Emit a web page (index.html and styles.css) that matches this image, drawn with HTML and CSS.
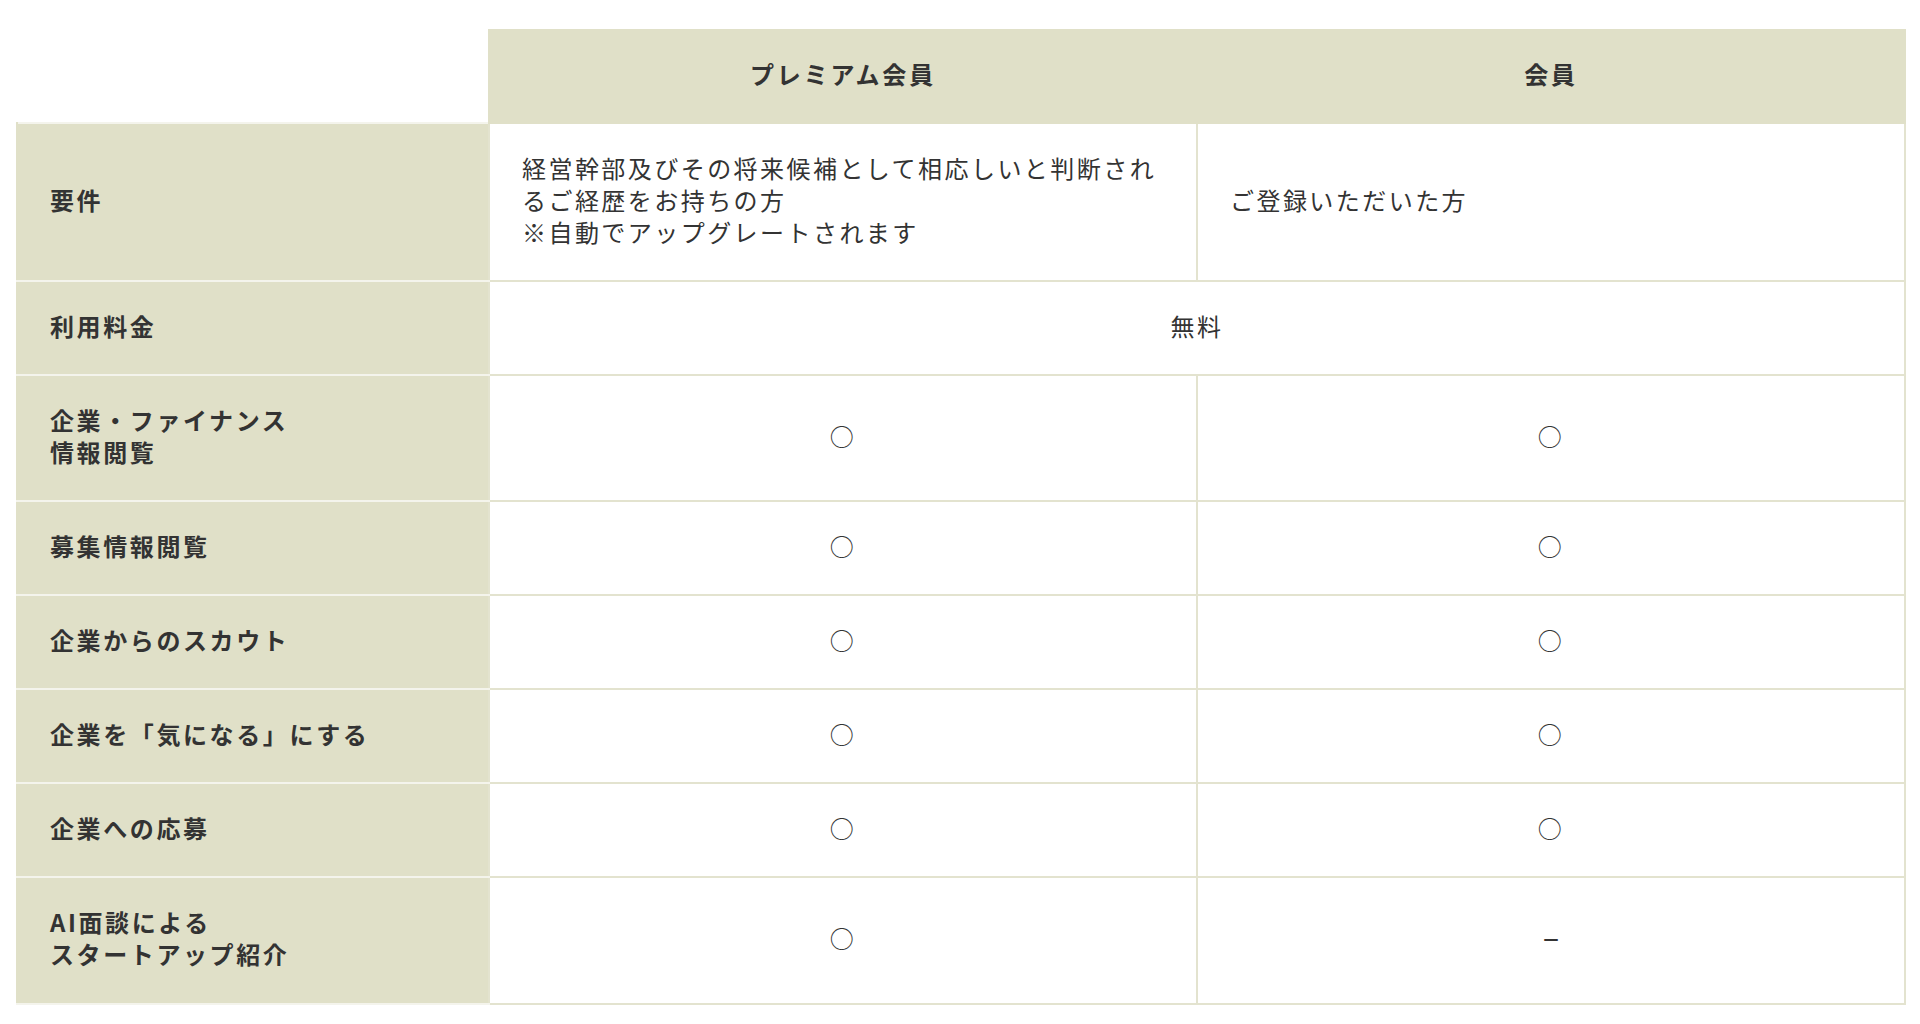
FILE: index.html
```html
<!DOCTYPE html>
<html lang="ja">
<head>
<meta charset="utf-8">
<title>会員比較</title>
<link rel="stylesheet" href="styles.css">
</head>
<body>
<div class="wrap">
  <table class="plan">
    <colgroup>
      <col class="c-label">
      <col class="c-plan">
      <col class="c-plan">
    </colgroup>
    <thead>
      <tr>
        <th class="corner"></th>
        <th class="head">プレミアム会員</th>
        <th class="head">会員</th>
      </tr>
    </thead>
    <tbody>
      <tr>
        <th class="label">要件</th>
        <td class="text">経営幹部及びその将来候補として相応しいと判断されるご経歴をお持ちの方<br>※自動でアップグレートされます</td>
        <td class="text">ご登録いただいた方</td>
      </tr>
      <tr>
        <th class="label">利用料金</th>
        <td class="mark" colspan="2">無料</td>
      </tr>
      <tr>
        <th class="label">企業・ファイナンス<br>情報閲覧</th>
        <td class="mark">○</td>
        <td class="mark">○</td>
      </tr>
      <tr>
        <th class="label">募集情報閲覧</th>
        <td class="mark">○</td>
        <td class="mark">○</td>
      </tr>
      <tr>
        <th class="label">企業からのスカウト</th>
        <td class="mark">○</td>
        <td class="mark">○</td>
      </tr>
      <tr>
        <th class="label">企業を「気になる」にする</th>
        <td class="mark">○</td>
        <td class="mark">○</td>
      </tr>
      <tr>
        <th class="label">企業への応募</th>
        <td class="mark">○</td>
        <td class="mark">○</td>
      </tr>
      <tr>
        <th class="label">AI面談による<br>スタートアップ紹介</th>
        <td class="mark">○</td>
        <td class="mark"><span class="dash">－</span></td>
      </tr>
    </tbody>
  </table>
</div>
</body>
</html>
```

FILE: styles.css
```css
html, body {
  margin: 0;
  padding: 0;
  background: #ffffff;
}

body {
  font-family: "Noto Sans CJK JP", "Noto Sans", sans-serif;
  color: #333333;
  font-size: 24px;
  line-height: 32px;
}

.wrap {
  padding: 29px 14px 20px 16px;
}

.plan {
  width: 100%;
  border-collapse: collapse;
  table-layout: fixed;
}

.c-label {
  width: 25%;
}

.c-plan {
  width: 37.5%;
}

.plan th,
.plan td {
  padding: 28px 32px 32px;
  vertical-align: middle;
}

.plan td {
  border: 2px solid #e3e3cf;
  background: #ffffff;
  font-weight: 400;
  letter-spacing: 2.45px;
}

.plan .corner {
  background: #ffffff;
  border: none;
}

.plan .head {
  padding: 27px 32px 32px;
  background: #e0e0c8;
  border: 2px solid #e0e0c8;
  text-align: center;
  font-weight: 700;
  letter-spacing: 2.8px;
}

.plan .label {
  background: #e0e0c8;
  border-top: 2px solid #f4f4ec;
  border-bottom: 2px solid #f4f4ec;
  border-left: 2px solid #e0e0c8;
  text-align: left;
  font-weight: 700;
  letter-spacing: 2.6px;
}

.plan tbody tr:last-child th,
.plan tbody tr:last-child td {
  padding-bottom: 33px;
}

.plan .text {
  text-align: left;
}

.plan .mark {
  text-align: center;
}

.dash {
  font-size: 19px;
  font-weight: 700;
  letter-spacing: 0;
}
```
